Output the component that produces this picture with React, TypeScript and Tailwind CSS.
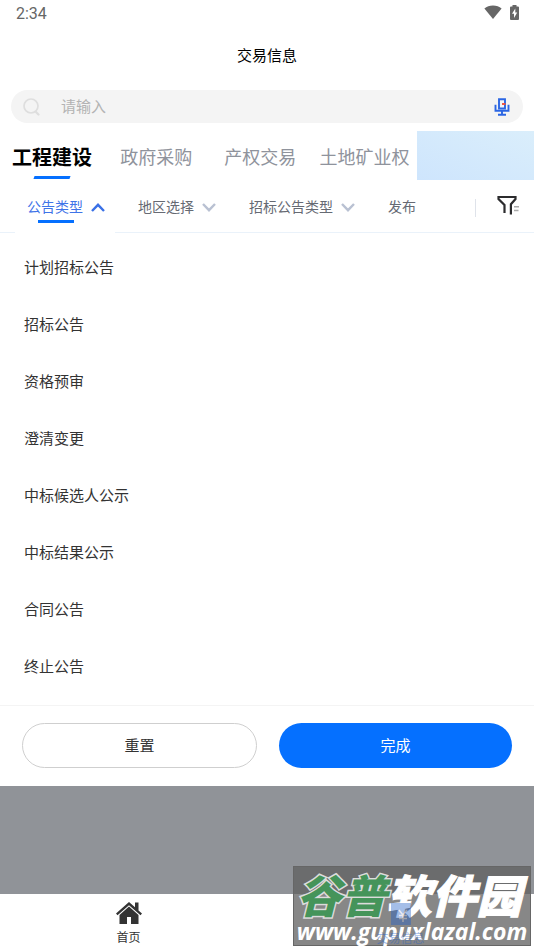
import { useState } from "react";

const tabs = ["工程建设", "政府采购", "产权交易", "土地矿业权"];
const filters = ["公告类型", "地区选择", "招标公告类型"];
const notices = [
  "计划招标公告",
  "招标公告",
  "资格预审",
  "澄清变更",
  "中标候选人公示",
  "中标结果公示",
  "合同公告",
  "终止公告",
];

function Chevron({ up }: { up: boolean }) {
  return (
    <svg viewBox="0 0 14 12" className="h-3 w-[14px]" fill="none" strokeWidth="2.4">
      {up ? (
        <path d="M1 11 7 4.800l6 6.200" stroke="#3a70e6" />
      ) : (
        <path d="M1 4 7 10.200l6-6.200" stroke="#b9c1d2" />
      )}
    </svg>
  );
}

function StatusBar() {
  return (
    <div className="flex h-7 items-center justify-between pr-[15px] pl-4">
      <span className="font-[Roboto] text-base text-[#666]">2:34</span>
      <div className="flex items-center gap-2 pb-1">
        <svg viewBox="0 0 18 14" className="h-[14px] w-[18px]" fill="#666">
          <path d="M9 14 0.4 3.6C2.600 1.500 5.600 0.500 9 0.500s6.400 1 8.600 3.100z" />
        </svg>
        <svg viewBox="0 0 9 15" className="h-[15px] w-[9px]">
          <path d="M2.500 0h4v1.500H8q1 0 1 1V14q0 1-1 1H1q-1 0-1-1V2.500q0-1 1-1h1.500z" fill="#666" />
          <path d="M5.300 3.500 2 8.800h2V13l3.200-5.600H5.300z" fill="#fff" />
        </svg>
      </div>
    </div>
  );
}

function SearchBox() {
  return (
    <div className="mx-[11px] flex h-[33px] items-center rounded-full bg-[#f4f4f4] pr-[13px] pl-3">
      <svg viewBox="0 0 18 18" className="h-[18px] w-[18px]" fill="none" stroke="#dedede" strokeWidth="1.700">
        <circle cx="8" cy="8" r="7" />
        <path d="m13 14 2.500 2.500" strokeWidth="2.200" strokeLinecap="round" />
      </svg>
      <input
        type="search"
        aria-label="搜索"
        placeholder="请输入"
        className="ml-5 h-full min-w-0 flex-1 bg-transparent pb-[2px] text-[15px] outline-none placeholder:text-[#b3b3b3]"
      />
      <button type="button" aria-label="语音输入">
        <svg viewBox="0 0 16 18" className="h-[18px] w-4" fill="none" stroke="#2b66e3" strokeWidth="1.900">
          <path d="M5 1.200h6v9.300H5z" />
          <path d="M1.500 6.800v6h13v-6M8 13v3.500M4 16.800h8" />
          <path d="M8 6h3.500" stroke="#f0503c" />
        </svg>
      </button>
    </div>
  );
}

function FilterIcon() {
  return (
    <svg viewBox="0 0 22 20" className="h-5 w-[22px]" fill="none">
      <path d="M7.500 18v-8L1.500 4V2h17v2l-4.600 5.200V19.500" stroke="#2c2c2e" strokeWidth="2.200" />
      <path d="M17 11.700h5M17 15.500h4.500" stroke="#aaa" strokeWidth="1.400" />
    </svg>
  );
}

function Watermark() {
  return (
    <div className="absolute right-[3px] bottom-1 flex h-20 w-[238px] flex-col items-center border border-[#666] bg-[#5f5f5f]/75 whitespace-nowrap text-white">
      <span className="flex h-[50px] items-center pt-1 pr-[6px] text-[45px] leading-[50px] font-black italic [paint-order:stroke]">
        <span className="text-[#45945a] [-webkit-text-stroke:3px_#dcdcdc]">谷普</span>
        <span className="[-webkit-text-stroke:1px_#fff]">软件园</span>
      </span>
      <span className="font-['Open_Sans'] text-[23px] leading-7 font-bold italic">www.gupuxlazal.com</span>
    </div>
  );
}

export default function App() {
  const [tab, setTab] = useState(0);
  const [open, setOpen] = useState(0);

  return (
    <div className="relative flex min-h-screen flex-col bg-white font-['Noto_Sans_CJK_SC',sans-serif] text-[#333]">
      <StatusBar />
      <h1 className="flex h-[62px] items-center justify-center pb-2 text-[15px] text-black">交易信息</h1>
      <SearchBox />

      <nav className="mt-2 flex h-[49px]">
        <div className="grid w-[78%] grid-cols-4">
          {tabs.map((name, i) => (
            <button
              key={name}
              type="button"
              onClick={() => setTab(i)}
              className={
                i === tab
                  ? "flex flex-col items-center justify-end text-xl font-bold whitespace-nowrap text-black"
                  : "flex flex-col items-center justify-end text-lg whitespace-nowrap text-[#8f939c]"
              }
            >
              <span className="leading-7">{name}</span>
              <span
                className={
                  i === tab
                    ? "mt-[5px] mb-px h-[3px] w-9 -skew-x-[20deg] bg-[#0570ff]"
                    : "mt-[6px] mb-px h-[3px] w-9"
                }
              />
            </button>
          ))}
        </div>
        <div className="flex-1 bg-linear-to-tr from-[#cee5fd] to-[#daeefb]" />
      </nav>

      <div className="flex h-[53px] items-stretch border-b border-[#eaf2fa] px-[15px] text-sm">
        <div className="flex flex-1 gap-[23px]">
          {filters.map((name, i) => (
            <button
              key={name}
              type="button"
              onClick={() => setOpen(i)}
              className={
                i === open
                  ? "-mb-px flex flex-col bg-white pr-[10px] pl-3 text-[#3f74e8]"
                  : "flex flex-col pr-[10px] text-[#666a73] first-of-type:pl-3"
              }
            >
              <span className="mt-4 flex items-center gap-2 leading-5 whitespace-nowrap">
                {name}
                <Chevron up={i === open} />
              </span>
              {i === open && <span className="mt-1 ml-[11px] h-[3px] w-9 bg-[#0570ff]" />}
            </button>
          ))}
          <button type="button" className="flex pt-4 leading-5 text-[#666a73]">
            发布
          </button>
        </div>
        <div className="mt-[19px] h-[18px] w-px bg-[#dfe3ea]" />
        <button type="button" aria-label="筛选" className="ml-[21px] flex items-start pt-[15px]">
          <FilterIcon />
        </button>
      </div>

      <ul className="pt-[6px] pb-[10px]">
        {notices.map((name) => (
          <li key={name}>
            <button type="button" className="flex h-[57px] w-full items-center px-6 text-[15px]">
              {name}
            </button>
          </li>
        ))}
      </ul>

      <div className="flex gap-[22px] border-t border-[#f4f4f4] px-[22px] pt-[17px] pb-[18px] text-[15px]">
        <button type="button" className="h-[45px] flex-1 rounded-full border border-[#cfcfcf] bg-white pb-px">
          重置
        </button>
        <button type="button" className="h-[45px] flex-1 rounded-full bg-[#0570ff] pb-px text-white">
          完成
        </button>
      </div>

      <div className="min-h-[108px] flex-1 bg-[#909398]" />

      <footer className="grid h-14 grid-cols-2 text-xs">
        <a href="#home" className="flex flex-col items-center pt-[7px] pr-[10px]">
          <svg viewBox="0 0 26 24" className="h-6 w-[26px]" fill="#333">
            <path d="M13 1 0 12.500l1.500 1.700L13 4.200l11.500 10 1.500-1.700-3.500-3.100V1.500H19v4.800z" />
            <path d="m13 5.600-9.500 8.300V23H11v-7h4v7h7.500v-9.100z" />
          </svg>
          <span className="leading-6">首页</span>
        </a>
        <a href="#trade" className="z-10 flex flex-col items-center pt-2 text-[#1f5fc8] opacity-40">
          <svg viewBox="0 0 22 24" className="h-6 w-[22px]">
            <path d="M1 1h20v22H1z" fill="#1f5fc8" />
            <path d="m9 8 4 5 4-5M13 12v8M9 13.500h8M9 16.500h8" fill="none" stroke="#ccd" strokeWidth="1.500" />
          </svg>
          <span className="leading-6">交易信息</span>
        </a>
      </footer>
      <Watermark />
    </div>
  );
}
